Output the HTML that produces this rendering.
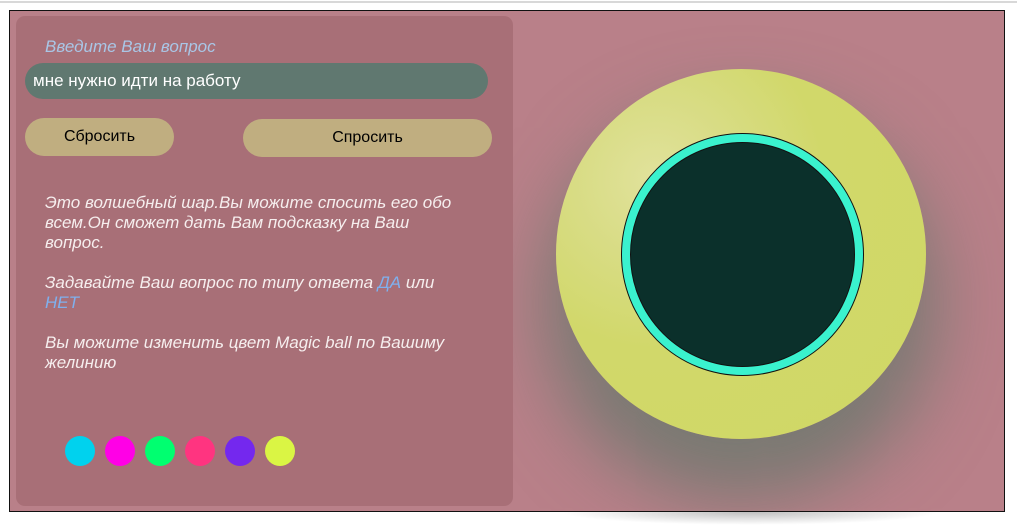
<!DOCTYPE html>
<html><head><meta charset="utf-8"><style>
*{margin:0;padding:0;box-sizing:border-box}
body{width:1017px;height:525px;background:#fff;position:relative;overflow:hidden;font-family:"Liberation Sans",sans-serif}
.topline{position:absolute;left:0;top:1px;width:1017px;height:2px;background:#d8d8d8}
.wrap{position:absolute;left:9px;top:10px;width:996px;height:502px;border:1px solid #111;background:#b98089;overflow:hidden}
.outsh{position:absolute;left:560px;top:512px;width:380px;height:13px;background:radial-gradient(ellipse at 50% 0,rgba(0,0,0,.25),rgba(0,0,0,0) 70%)}
.panel{position:absolute;left:6px;top:5px;width:497px;height:490px;background:#a86f77;border-radius:9px}
.lbl{position:absolute;left:29px;top:21px;font-style:italic;font-size:17px;color:#a9c6e6}
.inp{position:absolute;left:9px;top:47px;width:463px;height:36px;border-radius:18px;background:#607870;color:#fff;font-size:17px;line-height:36px;padding-left:8px}
.btn{position:absolute;height:38px;border-radius:19px;background:#c0ae80;color:#000;font-size:16px;line-height:38px;text-align:center}
.txt{position:absolute;left:29px;top:177px;width:415px;font-style:italic;font-size:17px;line-height:20px;color:#f6eeee}
.txt p{margin-bottom:20px}
.b{color:#7fb0ee}
.dot{position:absolute;top:420px;width:30px;height:30px;border-radius:50%}
.ball{position:absolute;left:546px;top:58px;width:370px;height:370px;border-radius:50%;background:radial-gradient(circle at 27% 30%,#e1e29c 0,#d8dc84 22%,#d1d86a 45%,#d0d765 100%);box-shadow:0 50px 70px 12px rgba(110,120,110,.85)}
.ring{position:absolute;left:611px;top:122px;width:243px;height:243px;border-radius:50%;background:#3af2ce;border:1px solid #111}
.core{position:absolute;left:620px;top:131px;width:225px;height:225px;border-radius:50%;background:#0b302b;border:1px solid #111}
</style></head><body>
<div class="topline"></div>
<div class="outsh"></div>
<div class="wrap">
<div class="ball"></div>
<div class="ring"></div>
<div class="core"></div>
<div class="panel">
<div class="lbl">Введите Ваш вопрос</div>
<div class="inp">мне нужно идти на работу</div>
<div class="btn" style="left:9px;top:102px;width:149px">Сбросить</div>
<div class="btn" style="left:227px;top:103px;width:249px">Спросить</div>
<div class="txt">
<p>Это волшебный шар.Вы можите спосить его обо всем.Он сможет дать Вам подсказку на Ваш вопрос.</p>
<p>Задавайте Ваш вопрос по типу ответа <span class="b">ДА</span> или <span class="b">НЕТ</span></p>
<p>Вы можите изменить цвет Magic ball по Вашиму желинию</p>
</div>
<div class="dot" style="left:49px;background:#00d2ee"></div>
<div class="dot" style="left:89px;background:#ff00e6"></div>
<div class="dot" style="left:129px;background:#00ff70"></div>
<div class="dot" style="left:169px;background:#ff3480"></div>
<div class="dot" style="left:209px;background:#7428ee"></div>
<div class="dot" style="left:249px;background:#daf544"></div>
</div>
</div>
</body></html>
